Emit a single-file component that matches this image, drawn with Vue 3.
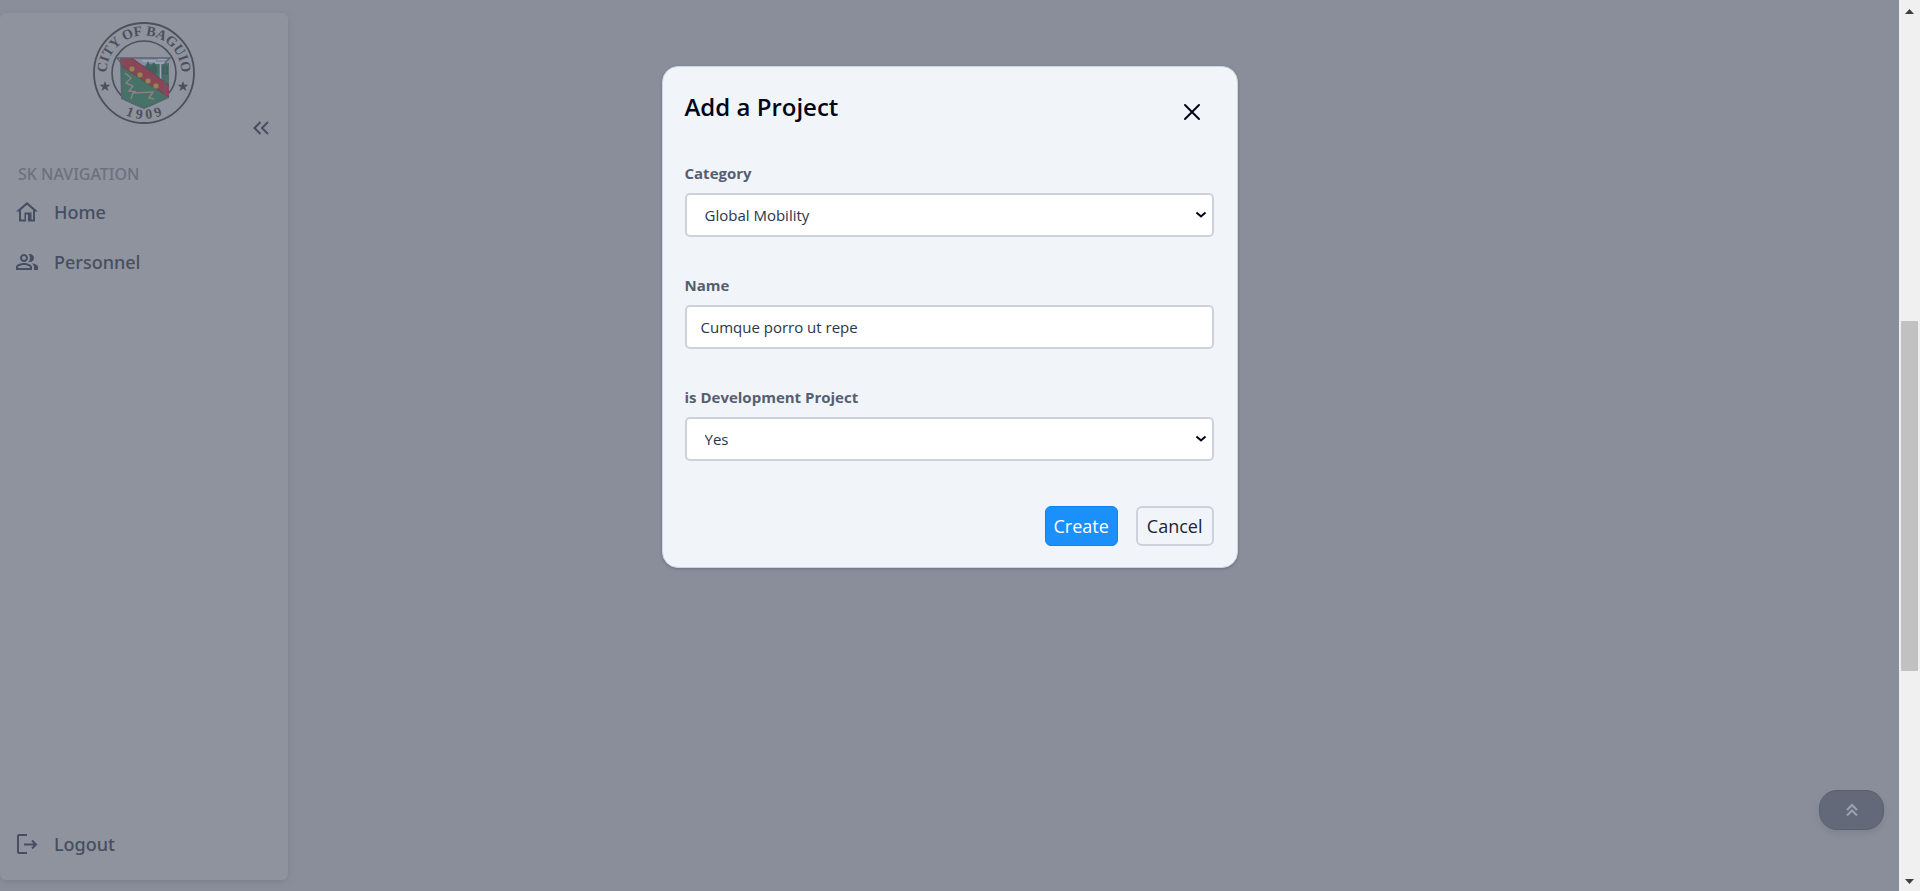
<script setup>
import { ref } from 'vue'

const category = ref('Global Mobility')
const name = ref('Cumque porro ut repe')
const development = ref('Yes')
</script>

<template>
  <div class="page">
    <aside class="sidebar">
      <svg class="seal" viewBox="0 0 104 104" role="img" aria-label="City seal">
        <defs>
          <path id="arc-top" d="M14.500 52a37.500 37.500 0 0 1 75 0" />
          <path id="arc-bottom" d="M6 52a46 46 0 0 0 92 0" />
          <clipPath id="shield"><path d="M28 37H77V77L52 88L29 78Z" /></clipPath>
        </defs>
        <circle cx="52" cy="52" r="50" fill="none" stroke="#4b505c" stroke-width="1.800" />
        <circle cx="52" cy="52" r="32" fill="none" stroke="#4b505c" stroke-width="1.600" />
        <g clip-path="url(#shield)">
          <rect x="25" y="34" width="54" height="56" fill="#467268" />
          <path d="M34 36H78V42L68 43L61 42L54 45L34 40Z" fill="#8290a2" />
          <path d="M50 40h14M61 42h13M66 38h8" stroke="#a2abb9" stroke-width="1.500" />
          <path d="M53 46l3-6 3 6 3-5 3 5v7H53ZM70 46l3-4 3 4v8h-6Z" fill="#3f625f" />
          <path d="M68.500 42V60" stroke="#96a4b4" stroke-width="1.600" />
          <path d="M33 52l6 5-5 5 7 3-4 5 7 1M39 78l2-6 20-1-4 6 5 1" fill="none" stroke="#8a8080" stroke-width="1.500" />
          <path d="M26 37H40L78 65V77L31 46Z" fill="#8b4556" stroke="#704455" />
        </g>
        <path d="M25 37H78L73 42V77Q64 83 52 87Q40 83 30 77V43Z" fill="none" stroke="#596270" stroke-width="1.300" />
        <g fill="#998455" stroke="#775d4b" stroke-width=".6">
          <circle cx="40" cy="48" r="2.800" /><circle cx="48" cy="54" r="2.800" />
          <circle cx="56" cy="60" r="2.800" /><circle cx="64" cy="65" r="2.800" />
        </g>
        <path id="star" d="M13 60l1.400 3.800h4l-3.200 2.400 1.200 3.900-3.400-2.400-3.400 2.400 1.200-3.900-3.200-2.400h4Z" fill="#4b505c" />
        <use href="#star" x="78" />
        <text class="seal-text"><textPath href="#arc-top" startOffset="50%" text-anchor="middle">CITY OF BAGUIO</textPath></text>
        <text class="seal-text"><textPath href="#arc-bottom" startOffset="50%" text-anchor="middle">1 9 0 9</textPath></text>
      </svg>
      <button class="collapse" type="button" aria-label="Collapse sidebar">
        <svg width="24" height="24" viewBox="0 0 24 24" fill="none" stroke="currentColor" stroke-width="2"><path d="M11.500 6l-6 6 6 6M19 6l-6 6 6 6" /></svg>
      </button>
      <nav class="nav">
        <h2>SK NAVIGATION</h2>
        <a href="#home">
          <svg width="24" height="24" viewBox="0 0 24 24" fill="currentColor"><path d="M12 4.700l6 5.300V19.500h-1.500V12.500h-7V19.500H6V10l6-5.300M12 2L1 11.500h3V21.500h7v-7h2v7h7v-10h3L12 2z" /></svg>
          Home
        </a>
        <a href="#personnel">
          <svg width="24" height="24" viewBox="0 0 24 24" fill="currentColor"><path d="M16.670 13.130C18.040 14.060 19 15.320 19 17v3h4v-3c0-2.180-3.570-3.470-6.330-3.870zM15 12c2.210 0 4-1.790 4-4s-1.790-4-4-4c-.47 0-.91.1-1.330.24C14.500 5.270 15 6.580 15 8s-.5 2.730-1.330 3.760c.42.140.86.240 1.330.240zM9 12c2.210 0 4-1.790 4-4s-1.790-4-4-4-4 1.790-4 4 1.790 4 4 4zm0-6c1.100 0 2 .9 2 2s-.9 2-2 2-2-.9-2-2 .9-2 2-2zM9 13c-2.670 0-8 1.340-8 4v3h16v-3c0-2.660-5.330-4-8-4zm6 5H3v-.99C3.200 16.290 6.300 15 9 15s5.800 1.290 6 2v1z" /></svg>
          Personnel
        </a>
      </nav>
      <a class="logout" href="#logout">
        <svg width="24" height="24" viewBox="0 0 24 24" fill="none" stroke="currentColor" stroke-width="2"><path d="M12 3H4Q3 3 3 4V20Q3 21 4 21H12M9 12.500H21M17 8.500l4 4-4 4" /></svg>
        Logout
      </a>
    </aside>

    <main class="stage">
      <form class="modal" role="dialog" aria-labelledby="dialog-title" @submit.prevent>
        <header>
          <h1 id="dialog-title">Add a Project</h1>
          <button class="close" type="button" aria-label="Close">
            <svg width="24" height="24" viewBox="0 0 24 24" fill="none" stroke="currentColor" stroke-width="2" stroke-linecap="round"><path d="M5 5l14 14M19 5L5 19" /></svg>
          </button>
        </header>
        <div class="field">
          <label for="category">Category</label>
          <div class="select">
            <select id="category" v-model="category"><option>Global Mobility</option></select>
            <svg width="12" height="8" viewBox="0 0 12 8"><path d="M1.500 1.500L6 5.500L10.500 1.500" /></svg>
          </div>
        </div>
        <div class="field">
          <label for="name">Name</label>
          <input id="name" v-model="name" type="text">
        </div>
        <div class="field">
          <label for="development">is Development Project</label>
          <div class="select">
            <select id="development" v-model="development"><option>Yes</option><option>No</option></select>
            <svg width="12" height="8" viewBox="0 0 12 8"><path d="M1.500 1.500L6 5.500L10.500 1.500" /></svg>
          </div>
        </div>
        <footer>
          <button class="create" type="submit">Create</button>
          <button class="cancel" type="button">Cancel</button>
        </footer>
      </form>
    </main>

    <button class="to-top" type="button" aria-label="Back to top">
      <svg width="16" height="16" viewBox="0 0 16 16" fill="none" stroke="currentColor" stroke-width="2"><path d="M3 8l5-5 5 5M3 13.500l5-5 5 5" /></svg>
    </button>

    <div class="scrollbar" aria-hidden="true">
      <svg width="9" height="5" viewBox="0 0 9 5"><path d="M4.500 0L9 5H0Z" /></svg>
      <div class="track"><div class="thumb"></div></div>
      <svg width="9" height="5" viewBox="0 0 9 5"><path d="M0 0H9L4.500 5Z" /></svg>
    </div>
  </div>
</template>

<style>
body { margin: 0; background: #8a8e9a; }
</style>

<style scoped>
* { box-sizing: border-box; }
.page {
  position: relative;
  display: flex;
  min-height: 100vh;
  background: #8a8e9a;
  font-family: "Open Sans", "Noto Sans", sans-serif;
  color: #020617;
}
button, input, select { font: inherit; color: inherit; }
button { cursor: pointer; padding: 0; }
h1, h2 { margin: 0; }

.sidebar {
  display: flex;
  flex-direction: column;
  width: 288px;
  margin: 13px 0 11px;
  padding: 8px 15px 23px;
  border-radius: 6px;
  background: #8f939d;
  box-shadow: 0 2px 6px #7c808c;
  color: #464e61;
  font-family: "Noto Sans", "Open Sans", sans-serif;
  font-weight: 500;
}
.seal { width: 104px; height: 104px; align-self: center; }
.seal-text { font: bold 14px "Liberation Serif", serif; fill: #4b505c; }
.collapse {
  display: flex;
  align-self: flex-end;
  margin-top: -9px;
  border: 0;
  background: none;
}
.nav { display: flex; flex-direction: column; margin-top: 22px; }
.nav h2 { padding: 0 0 1px 3px; font-size: 16px; line-height: 24px; font-weight: 500; color: #6c717e; }
.nav a, .logout {
  display: flex;
  align-items: center;
  gap: 15px;
  height: 50px;
  color: inherit;
  font-size: 18px;
  line-height: 28px;
  text-decoration: none;
}
.logout { margin-top: auto; height: 26px; }

.stage { flex: 1; display: flex; justify-content: center; align-items: flex-start; padding-top: 66px; }
.modal {
  width: 576px;
  margin-right: 288px;
  padding: 22px 23px 21px 22px;
  border: 1px solid #cbd5e1;
  border-radius: 16px;
  background: #f1f5f9;
  box-shadow: 0 1px 3px #6c7180;
}
.modal header { display: flex; justify-content: space-between; height: 72px; }
h1 { font-size: 24px; line-height: 36px; font-weight: 600; }
.close { display: flex; width: 44px; height: 46px; align-items: center; justify-content: center; border: 0; background: none; }
.field { display: flex; flex-direction: column; gap: 8px; height: 112px; }
label { font-size: 15px; line-height: 24px; font-weight: 700; color: #565e70; }
input, select {
  width: 100%;
  height: 44px;
  border: 2px solid #cdd1d9;
  border-radius: 5px;
  background: #fff;
  color: #2b354a;
  font-size: 15px;
  font-weight: 400;
  outline: 0;
}
input { padding: 0 14px; }
select { padding: 0 18px; appearance: none; }
.select { display: grid; align-items: center; }
.select > * { grid-area: 1 / 1; }
.select svg { justify-self: end; margin-right: 7px; fill: none; stroke: #020617; stroke-width: 2; pointer-events: none; }
.modal footer { display: flex; justify-content: flex-end; gap: 18px; margin-top: 9px; }
.create, .cancel { height: 40px; border-radius: 6px; font-size: 18px; line-height: 28px; }
.create { padding: 0 8px; border: 1px solid #0a84f5; background: #1b90fa; color: #fff; }
.cancel { padding: 0 9px; border: 2px solid #cdd1d9; background: #f1f5f9; color: #1b2438; }

.to-top {
  position: absolute;
  right: 36px;
  bottom: 61px;
  display: flex;
  align-items: center;
  justify-content: center;
  width: 65px;
  height: 40px;
  border: 1px solid #5b6170;
  border-radius: 18px;
  background: #636978;
  box-shadow: 0 4px 6px #7f8491;
  color: #9da2b0;
}
.scrollbar {
  display: flex;
  flex-direction: column;
  align-items: center;
  width: 21px;
  padding: 9px 0 7px;
  background: #f0f0f0;
  fill: #404040;
}
.track { flex: 1; display: flex; flex-direction: column; width: 17px; padding-top: 307px; }
.thumb { height: 41%; min-height: 350px; background: #c1c1c1; }
</style>
